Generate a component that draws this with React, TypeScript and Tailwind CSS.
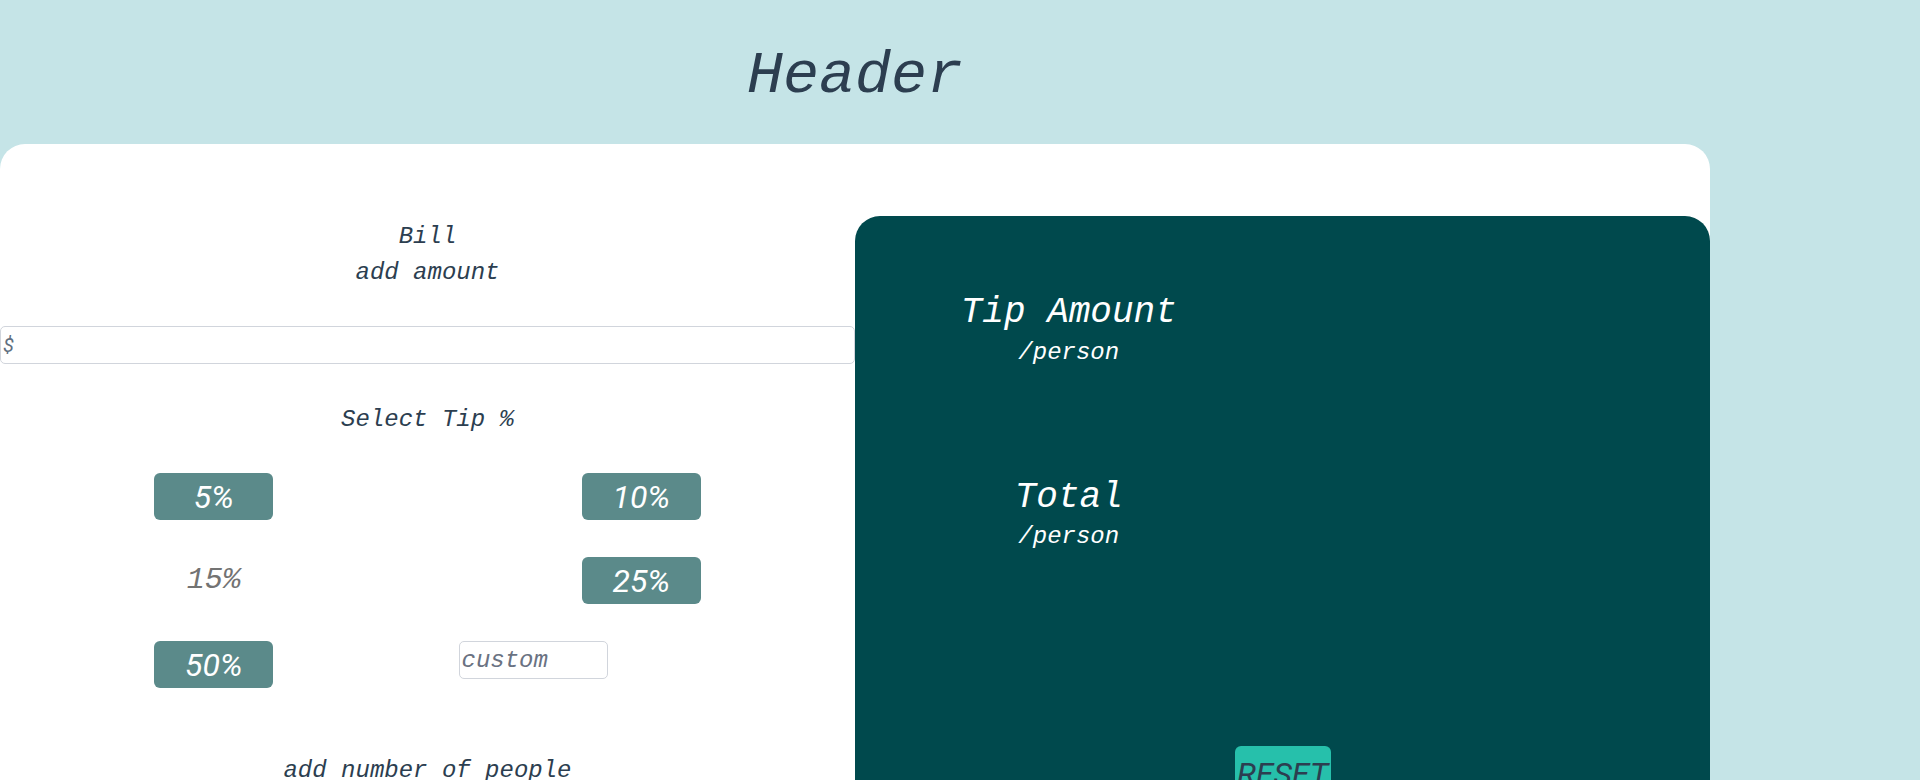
const mono = "font-['Liberation_Mono',monospace] italic";
const sans = "font-['Roboto','Liberation_Sans',sans-serif] italic";

export default function App() {
  return (
    <main className={`min-h-screen bg-[#c5e4e7] text-[#2c3e50] ${mono}`}>
      {/* Header */}
      <header className="flex h-[144px] w-[1710px] items-center justify-center pt-[7px]">
        <h1 className="text-[60px] leading-none">Header</h1>
      </header>

      {/* Card */}
      <section className="flex w-[1710px] rounded-[25px] bg-white pb-10">
        {/* Left: inputs */}
        <div className="flex w-[855px] flex-col items-center pt-[75px]">
          <label className="text-center text-2xl leading-[36px]">
            Bill
            <br />
            add amount
          </label>
          <input
            type="text"
            placeholder="$"
            className={`mt-[35px] h-[38px] w-full rounded-[5px] border border-gray-300 px-0.5 text-xl placeholder:text-[#5f6f80] ${sans}`}
          />

          <p className="mt-[38px] text-2xl leading-[36px]">Select Tip %</p>

          <div className="mt-[35px] grid w-full grid-cols-2 gap-y-[37px]">
            <TipButton label="5%" />
            <TipButton label="10%" />
            <div className="flex h-[47px] items-center justify-center text-[30px] text-[#737373]">15%</div>
            <TipButton label="25%" />
            <TipButton label="50%" />
            <input
              type="text"
              placeholder="custom"
              className={`ml-[31px] h-[38px] w-[149px] justify-self-start rounded-[5px] border border-gray-300 px-0.5 text-2xl placeholder:text-gray-500 ${mono}`}
            />
          </div>

          <p className="mt-[65px] text-2xl leading-[36px]">add number of people</p>
        </div>

        {/* Right: results */}
        <div className="mt-[72px] flex w-[855px] flex-col rounded-[25px] bg-[#00494d] pb-10 text-white">
          <div className="grid grid-cols-2 pt-[77px]">
            <div className="flex flex-col items-center">
              <h2 className="text-4xl leading-[40px]">Tip Amount</h2>
              <span className="mt-1 text-2xl leading-[32px]">/person</span>
              <h2 className="mt-[109px] text-4xl leading-[40px]">Total</h2>
              <span className="mt-[3px] text-2xl leading-[32px]">/person</span>
            </div>
            <div />
          </div>
          <button
            className={`mx-auto mt-[193px] w-[96px] rounded-[6px] bg-[#26c0ab] pt-2 pb-1 text-[32px] leading-[40px] text-[#2c3e50] ${sans}`}
          >
            RESET
          </button>
        </div>
      </section>
    </main>
  );
}

function TipButton({ label }: { label: string }) {
  return (
    <button
      className={`h-[47px] w-[119px] justify-self-center rounded-[6px] bg-[#5b8a8a] text-[32px] leading-none text-white ${sans}`}
    >
      {label}
    </button>
  );
}
